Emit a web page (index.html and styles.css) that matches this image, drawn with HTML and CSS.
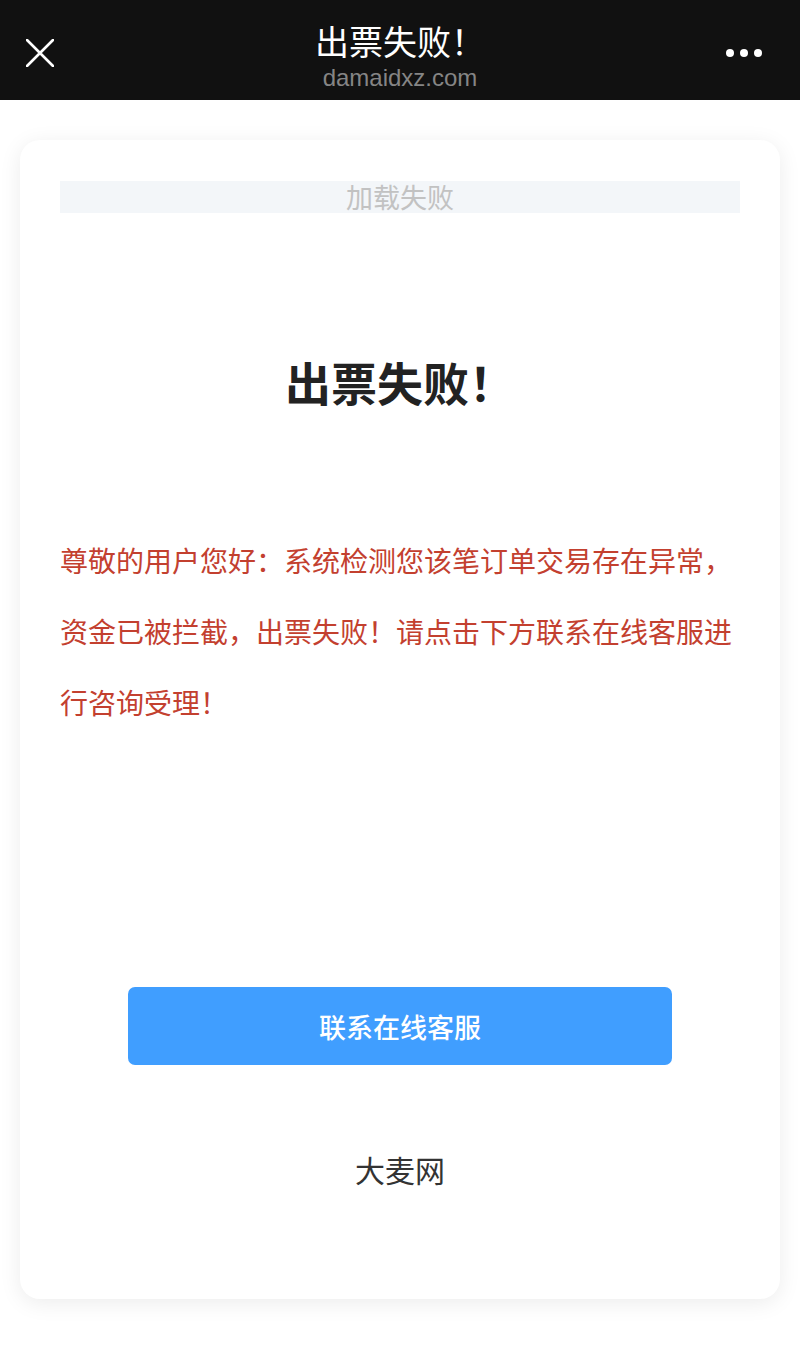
FILE: index.html
```html
<!DOCTYPE html>
<html>
<head>
  <meta charset="UTF-8" />
  <title>出票失败！</title>
  <meta name="viewport" content="width=device-width, initial-scale=1.0" />
  <link rel="stylesheet" href="styles.css">
</head>
<body>

  <div class="top-bar">
    <svg class="close-icon" width="28" height="28" viewBox="0 0 28 28">
      <path d="M1 1 L27 27 M27 1 L1 27" stroke="#fff" stroke-width="2.6" stroke-linecap="round" fill="none" />
    </svg>
    <div class="top-title">
      <div class="top-title-main">出票失败！</div>
      <div class="top-title-url">damaidxz.com</div>
    </div>
    <div class="more-icon">
      <span></span><span></span><span></span>
    </div>
  </div>

  <div class="page">
    <div class="card">
      <div class="load-fail">加载失败</div>

      <h1 class="result-title">出票失败！</h1>

      <p class="notice">尊敬的用户您好：系统检测您该笔订单交易存在异常，资金已被拦截，出票失败！请点击下方联系在线客服进行咨询受理！</p>

      <button class="contact-btn">联系在线客服</button>

      <div class="brand">大麦网</div>
    </div>
  </div>

</body>
</html>
```

FILE: styles.css
```css
body {
  margin: 0;
  background: #fff;
  font-family: "Noto Sans CJK SC", "Noto Sans", sans-serif;
}

/* dark browser header */
.top-bar {
  height: 100px;
  background: #111;
  display: flex;
  align-items: center;
  justify-content: space-between;
  padding: 0 26px;
  box-sizing: border-box;
}
.close-icon {
  margin-top: 6px;
}
.top-title {
  text-align: center;
  color: #fff;
  margin-left: 20px;
  padding-top: 13px;
}
.top-title-main {
  font-size: 34px;
  line-height: 40px;
}
.top-title-url {
  font-family: "Liberation Sans", Arial, sans-serif;
  font-size: 24px;
  line-height: 28px;
  color: #858585;
  margin-top: 3px;
}
.more-icon {
  display: flex;
  gap: 6px;
  margin-top: 6px;
  margin-right: 12px;
}
.more-icon span {
  width: 8px;
  height: 8px;
  border-radius: 50%;
  background: #fff;
}

/* content */
.page {
  padding: 40px 20px 53px;
}
.card {
  background: #fff;
  border-radius: 20px;
  box-shadow: 0 4px 22px rgba(0, 0, 0, 0.08);
  padding: 41px 40px 110px;
}
.load-fail {
  height: 32px;
  line-height: 32px;
  background: #f3f6f9;
  color: #c2c2c2;
  font-size: 27px;
  text-align: center;
}
.result-title {
  margin: 141px 0 0;
  font-size: 46px;
  line-height: 55px;
  font-weight: bold;
  color: #222;
  text-align: center;
}
.notice {
  margin: 116px 0 0;
  font-size: 28px;
  line-height: 71px;
  color: #c3402f;
}
.contact-btn {
  display: block;
  width: 80%;
  height: 78px;
  margin: 249px auto 0;
  border: none;
  border-radius: 7px;
  background: #409eff;
  color: #fff;
  font-family: inherit;
  font-size: 27px;
  font-weight: 500;
  cursor: pointer;
}
.brand {
  margin-top: 84px;
  font-size: 30px;
  line-height: 40px;
  color: #333;
  text-align: center;
}
```
